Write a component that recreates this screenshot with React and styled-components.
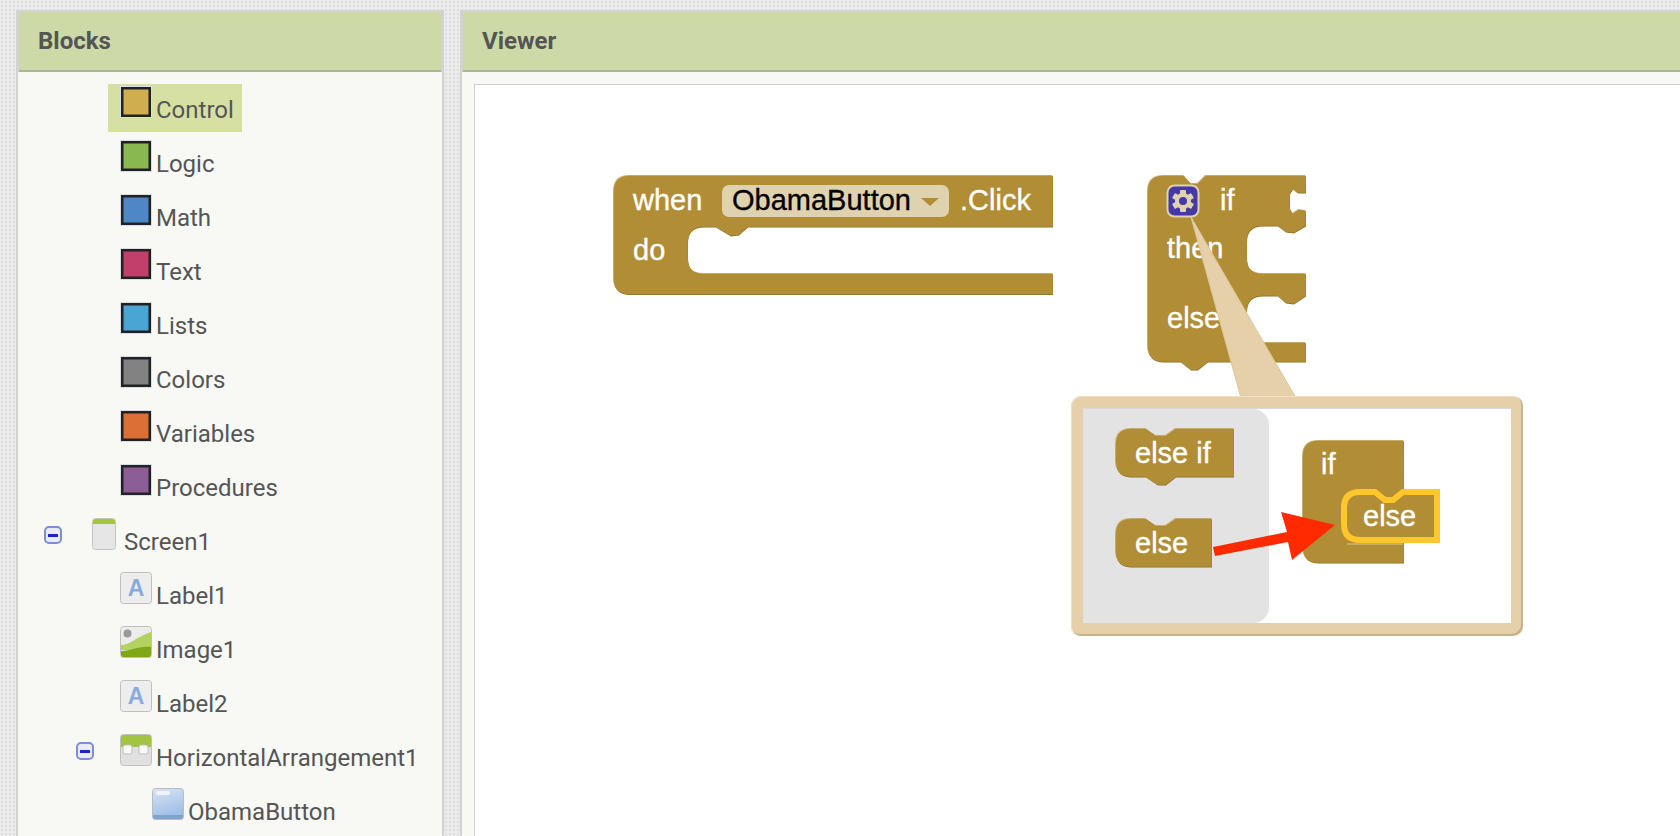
import React from 'react';
import styled, { createGlobalStyle } from 'styled-components';

const BLOCK = '#b18e35';
const BLOCK_LIGHT = '#cdb478';
const BLOCK_DARK = '#8a6e28';
const BUBBLE = '#e5d0a9';
const FIELD = '#dfd2ae';

const GlobalStyle = createGlobalStyle`
  html, body {
    margin: 0;
    height: 100%;
    overflow: hidden;
  }
  body {
    background-color: #ececec;
    background-image:
      radial-gradient(#dddddd 1px, transparent 1.2px),
      radial-gradient(#f4f4f4 1px, transparent 1.2px);
    background-size: 4px 4px, 8px 8px;
    background-position: 0 0, 2px 2px;
    font-family: Roboto, 'Liberation Sans', sans-serif;
  }
`;

const Page = styled.div`
  display: flex;
  gap: 16px;
  height: 826px;
  padding: 10px 0 0 16px;
  overflow: hidden;
`;

const Panel = styled.section`
  display: flex;
  flex: none;
  flex-direction: column;
  width: ${(p) => p.$width}px;
  padding: 2px 2px 0;
  box-sizing: border-box;
  background: #d2d2d2;
`;

const PanelHeader = styled.header`
  display: flex;
  flex: none;
  align-items: center;
  height: 58px;
  margin: 0 1px;
  padding-left: 19px;
  background: #cddaa8;
  border-bottom: 2px solid #b0b3a0;
  color: #555555;
  font-size: 24px;
  font-weight: 700;
`;

const PanelBody = styled.div`
  flex: 1;
  padding: 12px 0 0 ${(p) => p.$inset || 0}px;
  background: #f8f9f4;
  overflow: hidden;
`;

const Row = styled.div`
  display: flex;
  align-items: flex-start;
  height: 54px;
  padding-left: ${(p) => p.$indent}px;
`;

const Toggle = styled.span`
  display: flex;
  flex: none;
  align-items: center;
  justify-content: center;
  width: 18px;
  height: 18px;
  margin: 10px ${(p) => p.$gap}px 0 0;
  box-sizing: border-box;
  border: 2px solid #7d8fd4;
  border-radius: 5px;
  background: #e9ecf6;

  &::before {
    content: '';
    width: 10px;
    height: 3px;
    background: #2020cc;
  }
`;

const Item = styled.div`
  display: flex;
  align-items: flex-start;
  gap: ${(p) => p.$gap ?? 4}px;
  height: 48px;
  padding: 2px 8px 0 12px;
  box-sizing: border-box;
  background: ${(p) => (p.$selected ? '#d5e0a2' : 'transparent')};
`;

const ItemLabel = styled.span`
  padding-top: 12px;
  color: #555555;
  font-size: 24px;
  line-height: 24px;
  white-space: nowrap;
`;

const Swatch = styled.span`
  flex: none;
  width: 32px;
  height: 32px;
  box-sizing: border-box;
  border: 1px solid #d7deea;
  background: ${(p) => p.$color};
  box-shadow: inset 0 0 0 2.5px #222222;
`;

const TreeIcon = styled.svg`
  flex: none;
  width: ${(p) => p.$w || 32}px;
  height: 32px;
`;

const IconText = styled.text`
  fill: #86abdf;
  font-family: 'Liberation Sans', sans-serif;
  font-size: 23px;
  font-weight: 700;
`;

const Canvas = styled.div`
  position: relative;
  width: 1400px;
  height: 900px;
  box-sizing: border-box;
  border: 1px solid #cfcfcf;
  background: #ffffff;
`;

const Piece = styled.svg`
  position: absolute;
  left: ${(p) => p.$x - 475}px;
  top: ${(p) => p.$y - 85}px;
  width: ${(p) => p.$w}px;
  height: ${(p) => p.$h}px;
  overflow: visible;
`;

const BlockText = styled.text`
  fill: ${(p) => p.$fill || '#ffffff'};
  stroke: ${(p) => p.$fill || '#ffffff'};
  stroke-width: 0.35px;
  font-family: 'Liberation Sans', Arial, sans-serif;
  font-size: 29px;
`;

const Bubble = styled.div`
  position: absolute;
  left: 596px;
  top: 311px;
  display: flex;
  width: 452px;
  height: 240px;
  padding: 12px 12px 13px;
  box-sizing: border-box;
  border-radius: 10px;
  background: ${BUBBLE};
  box-shadow: inset -2px -2px 0 #c9b38a, inset 1px 1px 0 #efdfc2;
`;

const BubbleInner = styled.div`
  flex: 1;
  background: #ffffff;
  border-top: 1px solid #d9d9d9;
`;

const Flyout = styled.div`
  width: 186px;
  height: 100%;
  border-radius: 0 16px 16px 0;
  background: #e3e3e3;
`;

const Drawing = ({ x, y, w, h, children }) => (
  <Piece $x={x} $y={y} $w={w} $h={h} viewBox={`${x} ${y} ${w} ${h}`}>
    {children}
  </Piece>
);

// bevel comes from three offset copies of the same outline
const BlockShape = ({ d }) => (
  <>
    <path d={d} fill={BLOCK_DARK} transform="translate(1 1.5)" />
    <path d={d} fill={BLOCK_LIGHT} />
    <path d={d} fill={BLOCK} transform="translate(0.8 0.8)" />
  </>
);

const ScreenIcon = () => (
  <TreeIcon $w={24} viewBox="0 0 24 32">
    <rect x="0.5" y="0.5" width="23" height="31" rx="3" fill="#e6e6e6" stroke="#c4c4c4" />
    <path d="M1 6V3.500A2.500 2.500 0 0 1 3.500 1h17A2.500 2.500 0 0 1 23 3.500V6z" fill="#a5c63b" />
  </TreeIcon>
);

const LabelIcon = () => (
  <TreeIcon viewBox="0 0 32 32">
    <rect x="0.5" y="0.5" width="31" height="31" rx="3" fill="#ededed" stroke="#c0c0c0" />
    <IconText x="16" y="24" textAnchor="middle">A</IconText>
  </TreeIcon>
);

const ImageIcon = () => (
  <TreeIcon viewBox="0 0 32 32">
    <rect x="0.500" y="0.500" width="31" height="31" rx="3" fill="#ececec" stroke="#c0c0c0" />
    <circle cx="7.500" cy="7.500" r="4" fill="#9a9a9a" />
    <path d="M1 19C10 19 16 11 31 6V24H1z" fill="#b4d25e" />
    <path d="M1 25C12 25 18 20 31 21V29A2 2 0 0 1 29 31H3A2 2 0 0 1 1 29z" fill="#7fa614" />
  </TreeIcon>
);

const ArrangementIcon = () => (
  <TreeIcon viewBox="0 0 32 32">
    <rect x="0.500" y="0.500" width="31" height="31" rx="3" fill="#e0e0e0" stroke="#c0c0c0" />
    <path d="M1 13V3A2 2 0 0 1 3 1h26A2 2 0 0 1 31 3V13z" fill="#a3c440" />
    <rect x="3" y="11" width="9" height="9" rx="2" fill="#f8f8f8" stroke="#bdbdbd" />
    <rect x="19" y="11" width="9" height="9" rx="2" fill="#f8f8f8" stroke="#bdbdbd" />
  </TreeIcon>
);

const ButtonIcon = () => (
  <TreeIcon viewBox="0 0 32 32">
    <defs>
      <linearGradient id="btnFace" x1="0" y1="0" x2="0.300" y2="1">
        <stop offset="0" stopColor="#d8e5f5" />
        <stop offset="1" stopColor="#9dbde6" />
      </linearGradient>
    </defs>
    <rect x="0.500" y="0.500" width="31" height="31" rx="3" fill="url(#btnFace)" stroke="#bcbcbc" />
    <rect x="4" y="3" width="14" height="4" rx="2" fill="#f1f5fb" />
    <path d="M1 27H31V29A2 2 0 0 1 29 31H3A2 2 0 0 1 1 29z" fill="#7ea3d3" />
  </TreeIcon>
);

const palette = [
  ['Control', '#cfae50'],
  ['Logic', '#8ab850'],
  ['Math', '#4f86c6'],
  ['Text', '#c23f6c'],
  ['Lists', '#49a6d4'],
  ['Colors', '#828282'],
  ['Variables', '#dc6f36'],
  ['Procedures', '#8c5e97'],
];

const TEETH = [0, 60, 120, 180, 240, 300];

const GearButton = () => (
  <g>
    <rect x="1167.500" y="185.500" width="31" height="31" rx="7" fill="#4538a8" stroke={FIELD} strokeWidth="2" />
    {TEETH.map((deg) => (
      <rect key={deg} x="1180" y="190" width="6" height="6" rx="1" fill={FIELD} transform={`rotate(${deg} 1183 201)`} />
    ))}
    <circle cx="1183" cy="201" r="6" fill="none" stroke={FIELD} strokeWidth="4" />
  </g>
);

const EVENT_PATH =
  'M613 191Q613 175 629 175L1052 175L1052 226L747 226L738 234L730 235L715 226L703 226Q687 226 687 242L687 257Q687 273 703 273L1052 273L1052 293.500L629 293.500Q613 293.500 613 278Z';

const IF_PATH =
  'M1147 191Q1147 175 1163 175L1183 175L1190 183L1197 183L1205 175L1305 175L1305 192L1297 192L1292 188L1289 193L1289 208L1292 213L1298 209L1305 210L1305 225L1293 232L1285 231L1277 225L1262 225Q1246 225 1246 241L1246 257Q1246 273 1262 273L1305 273L1305 295L1293 303L1285 302L1277 295L1262 295Q1246 295 1246 311L1246 326Q1246 342 1262 342L1305 342L1305 361L1207 361L1197 369L1190 369L1180 361L1163 361Q1147 361 1147 345Z';

const ELSE_IF_PATH =
  'M1115 444Q1115 428 1131 428L1145 428L1155 435L1165 435L1175 428L1233 428L1233 476L1175 476L1165 484L1157 484L1145 476L1131 476Q1115 476 1115 460Z';

const ELSE_PATH =
  'M1115 534Q1115 518 1131 518L1145 518L1155 525L1165 525L1175 518L1211 518L1211 566L1131 566Q1115 566 1115 550Z';

const IF_SMALL_PATH =
  'M1302 456Q1302 440 1318 440L1403 440L1403 562L1318 562Q1302 562 1302 546Z';

const SELECTED_PATH =
  'M1344 508Q1344 492 1360 492L1375 492L1385 500L1393 500L1403 492L1437 492L1437 540L1360 540Q1344 540 1344 524Z';

const Workspace = () => (
  <Canvas>
    <Drawing x={613} y={175} w={440} h={122}>
      <BlockShape d={EVENT_PATH} />
      <BlockText x="633" y="210">when</BlockText>
      <rect x="722" y="185" width="227" height="32" rx="7" fill={FIELD} />
      <BlockText x="732" y="210" $fill="#000000">ObamaButton</BlockText>
      <path d="M921 198L939 198L930 206Z" fill={BLOCK} />
      <BlockText x="960" y="210">.Click</BlockText>
      <BlockText x="633" y="260">do</BlockText>
    </Drawing>

    <Drawing x={1147} y={175} w={160} h={197}>
      <BlockShape d={IF_PATH} />
      <GearButton />
      <BlockText x="1220" y="210">if</BlockText>
      <BlockText x="1167" y="258">then</BlockText>
      <BlockText x="1167" y="328">else</BlockText>
    </Drawing>

    <Drawing x={1191} y={217} w={104} h={182}>
      <path d="M1191 217L1241 398L1296 398Z" fill={BUBBLE} stroke="#dcc69c" strokeWidth="1" />
    </Drawing>

    <Bubble>
      <BubbleInner>
        <Flyout />
      </BubbleInner>
    </Bubble>

    <Drawing x={1115} y={428} w={330} h={140}>
      <BlockShape d={ELSE_IF_PATH} />
      <BlockText x="1135" y="463">else if</BlockText>
      <BlockShape d={ELSE_PATH} />
      <BlockText x="1135" y="553">else</BlockText>
      <BlockShape d={IF_SMALL_PATH} />
      <BlockText x="1321" y="474">if</BlockText>
      <path d="M1347 544L1403 544" stroke={BLOCK_LIGHT} strokeWidth="1.500" />
      <path d={SELECTED_PATH} fill={BLOCK} stroke="#ffc72c" strokeWidth="6" />
      <BlockText x="1363" y="526">else</BlockText>
      <path d="M1213 547L1287 532L1281 512L1335 525L1292 560L1288 542L1215 556Z" fill="#ff2a00" />
    </Drawing>
  </Canvas>
);

const App = () => (
  <>
    <GlobalStyle />
    <Page>
      <Panel $width={428}>
        <PanelHeader>Blocks</PanelHeader>
        <PanelBody>
          {palette.map(([name, color], i) => (
            <Row key={name} $indent={90}>
              <Item $selected={i === 0}>
                <Swatch $color={color} />
                <ItemLabel>{name}</ItemLabel>
              </Item>
            </Row>
          ))}
          <Row $indent={26}>
            <Toggle $gap={18} />
            <Item $gap={8}>
              <ScreenIcon />
              <ItemLabel>Screen1</ItemLabel>
            </Item>
          </Row>
          <Row $indent={90}>
            <Item>
              <LabelIcon />
              <ItemLabel>Label1</ItemLabel>
            </Item>
          </Row>
          <Row $indent={90}>
            <Item>
              <ImageIcon />
              <ItemLabel>Image1</ItemLabel>
            </Item>
          </Row>
          <Row $indent={90}>
            <Item>
              <LabelIcon />
              <ItemLabel>Label2</ItemLabel>
            </Item>
          </Row>
          <Row $indent={58}>
            <Toggle $gap={14} />
            <Item>
              <ArrangementIcon />
              <ItemLabel>HorizontalArrangement1</ItemLabel>
            </Item>
          </Row>
          <Row $indent={122}>
            <Item>
              <ButtonIcon />
              <ItemLabel>ObamaButton</ItemLabel>
            </Item>
          </Row>
        </PanelBody>
      </Panel>
      <Panel $width={1300}>
        <PanelHeader>Viewer</PanelHeader>
        <PanelBody $inset={12}>
          <Workspace />
        </PanelBody>
      </Panel>
    </Page>
  </>
);

export default App;
